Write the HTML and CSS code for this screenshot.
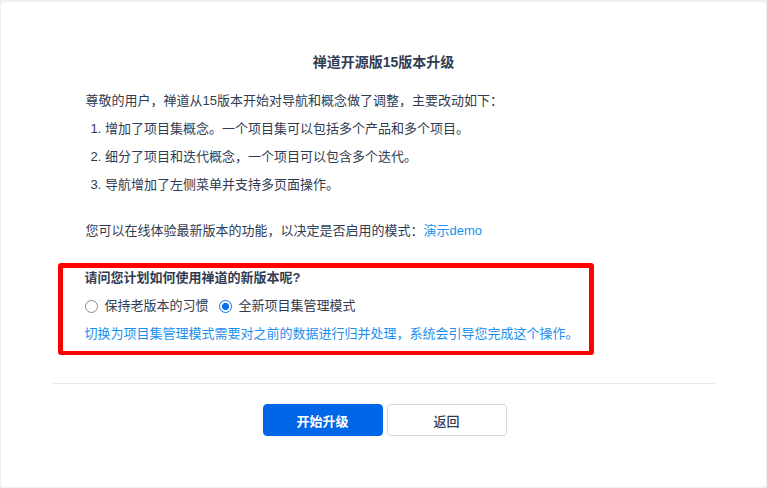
FILE: index.html
```html
<!DOCTYPE html>
<html lang="zh-CN">
<head>
<meta charset="utf-8">
<title>禅道开源版15版本升级</title>
<link rel="stylesheet" href="styles.css">
</head>
<body>
<div class="panel">
  <div class="content">
    <h2 class="title">禅道开源版15版本升级</h2>
    <div class="intro">
      <p class="line">尊敬的用户，禅道从15版本开始对导航和概念做了调整，主要改动如下：</p>
      <p class="item">1. 增加了项目集概念。一个项目集可以包括多个产品和多个项目。</p>
      <p class="item">2. 细分了项目和迭代概念，一个项目可以包含多个迭代。</p>
      <p class="item">3. 导航增加了左侧菜单并支持多页面操作。</p>
      <p class="line demo">您可以在线体验最新版本的功能，以决定是否启用的模式：<a class="link" href="#">演示demo</a></p>
    </div>
    <div class="choice">
      <div class="question">请问您计划如何使用禅道的新版本呢?</div>
      <div class="radios">
        <label class="radio"><input type="radio" name="mode" value="classic"><span>保持老版本的习惯</span></label>
        <label class="radio"><input type="radio" name="mode" value="new" checked><span>全新项目集管理模式</span></label>
      </div>
      <div class="hint">切换为项目集管理模式需要对之前的数据进行归并处理，系统会引导您完成这个操作。</div>
    </div>
    <div class="divider"></div>
    <div class="actions">
      <button class="btn primary">开始升级</button>
      <button class="btn">返回</button>
    </div>
  </div>
</div>
</body>
</html>
```
FILE: styles.css
```css
html, body {
  margin: 0;
  padding: 0;
}
body {
  background: #efefef;
  font-family: "Liberation Sans", "Noto Sans CJK SC", sans-serif;
  font-size: 13px;
  color: #313c52;
  height: 488px;
  overflow: hidden;
}
.panel {
  margin: 2px 1px 0 1px;
  height: 485px;
  background: #fff;
  border-radius: 4px;
  box-sizing: border-box;
  padding-top: 50px;
}
.content {
  width: 662px;
  margin: 0 auto;
}
.title {
  margin: 0;
  font-size: 14px;
  line-height: 20px;
  font-weight: bold;
  text-align: center;
  color: #313c52;
}
.intro {
  padding-left: 33px;
  margin-top: 15px;
}
.intro p {
  margin: 0;
  line-height: 28px;
}
.intro .item {
  padding-left: 5px;
}
.intro .demo {
  margin-top: 18px;
}
.link {
  color: #1a8ff0;
  text-decoration: none;
}
.choice {
  margin: 18px 0 0 5px;
  width: 536px;
  box-sizing: border-box;
  border: 5px solid #ff0000;
  border-bottom-width: 4px;
  border-radius: 3px;
  padding: 0 0 7px 22px;
}
.question {
  font-weight: bold;
  line-height: 20px;
}
.radios {
  margin-top: 8px;
  display: flex;
  gap: 10px;
  line-height: 20px;
}
.radio {
  display: flex;
  align-items: center;
  gap: 7px;
  cursor: pointer;
}
.radio input {
  appearance: none;
  -webkit-appearance: none;
  margin: 0;
  width: 13px;
  height: 13px;
  border: 1px solid #8a8a8a;
  border-radius: 50%;
  box-sizing: border-box;
  background: #fff;
}
.radio input:checked {
  border-color: #0a6ee8;
  background: radial-gradient(circle, #0a6ee8 0 3.3px, #fff 3.8px);
}
.hint {
  margin-top: 8px;
  line-height: 20px;
  color: #1a8ff0;
}
.divider {
  margin-top: 28px;
  height: 1px;
  background: #e8e8ea;
}
.actions {
  margin-top: 20px;
  display: flex;
  justify-content: center;
  gap: 4px;
  padding-left: 2px;
}
.btn {
  width: 120px;
  height: 32px;
  box-sizing: border-box;
  border: 1px solid #d4d8e0;
  border-radius: 4px;
  background: #fff;
  font-family: "Liberation Sans", "Noto Sans CJK SC", sans-serif;
  font-size: 13px;
  color: #313c52;
  font-weight: 500;
}
.btn.primary {
  background: #0066e8;
  border-color: #0066e8;
  color: #fff;
  font-weight: bold;
}
```
